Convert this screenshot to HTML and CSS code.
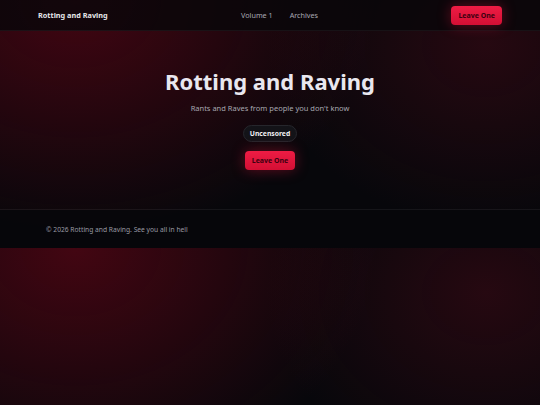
FILE: index.html
```html
<!DOCTYPE html>
<html>
    <head>
        <meta charset="UTF-8" />
        <title>Rotting and Raving</title>
        <link rel="stylesheet" href="styles.css">
    </head>
    <body>
    <header class="site-header">
        <a class="brand" href="#">Rotting and Raving</a>
        <nav class="nav-links">
            <a href="#">Volume 1</a>
            <a href="#">Archives</a>
        </nav>
        <a class="btn" href="#">Leave One</a>
    </header>

    <main class="hero">
        <h1>Rotting and Raving</h1>
        <p class="tagline">Rants and Raves from people you don't know</p>
        <span class="badge">Uncensored</span>
        <a class="btn" href="#">Leave One</a>
    </main>

    <footer class="site-footer">
        <p>&copy; 2026 Rotting and Raving. See you all in hell</p>
    </footer>
    </body>
</html>
```

FILE: styles.css
```css
    body{
        margin: 0;
        font-family: "Noto Sans", "Open Sans", sans-serif;
        color: #ececf1;
        background-color: #07070b;
        background-image:
            radial-gradient(ellipse 300px 240px at 14% 0%, rgba(125, 4, 24, 0.5), rgba(125, 4, 24, 0) 100%),
            radial-gradient(ellipse 220px 180px at 90% 18%, rgba(110, 12, 30, 0.3), rgba(110, 12, 30, 0) 100%);
    }
    a{
        text-decoration: none;
        color: inherit;
    }
    .site-header{
        display: flex;
        align-items: center;
        justify-content: space-between;
        height: 30px;
        padding: 0 38px;
        background: rgba(8, 6, 10, 0.82);
        border-bottom: 1px solid rgba(255, 255, 255, 0.05);
    }
    .brand{
        font-size: 7.3px;
        font-weight: 700;
        color: #e6e6ea;
    }
    .nav-links{
        display: flex;
        gap: 17px;
        font-size: 7.2px;
        color: #a9a9b2;
    }
    .btn{
        display: inline-block;
        padding: 4px 7px;
        font-size: 7px;
        font-weight: 700;
        line-height: 11px;
        color: #3d0010;
        background: linear-gradient(180deg, #ee1c44, #d30f34);
        border-radius: 4px;
        box-shadow: 0 0 14px rgba(230, 20, 60, 0.4);
    }
    .hero{
        display: flex;
        flex-direction: column;
        align-items: center;
        padding: 36px 0 39px;
        border-bottom: 1px solid rgba(255, 255, 255, 0.06);
    }
    .hero h1{
        margin: 0;
        font-size: 22px;
        line-height: 28px;
        font-weight: 700;
        color: #e9e7ef;
    }
    .tagline{
        margin: 7.5px 0 11.5px;
        font-size: 7.5px;
        line-height: 11px;
        color: #a7a7b0;
    }
    .badge{
        padding: 3px 6px;
        font-size: 6.8px;
        font-weight: 700;
        line-height: 9px;
        color: #f0f0f3;
        background: #131318;
        border: 1px solid #26262c;
        border-radius: 9px;
        margin-bottom: 9px;
    }
    .site-footer{
        height: 38px;
        padding: 0 46px;
        display: flex;
        align-items: center;
        background: rgba(6, 6, 10, 0.82);
    }
    .site-footer p{
        margin: 0;
        font-size: 6.7px;
        color: #9a9aa3;
    }
```
